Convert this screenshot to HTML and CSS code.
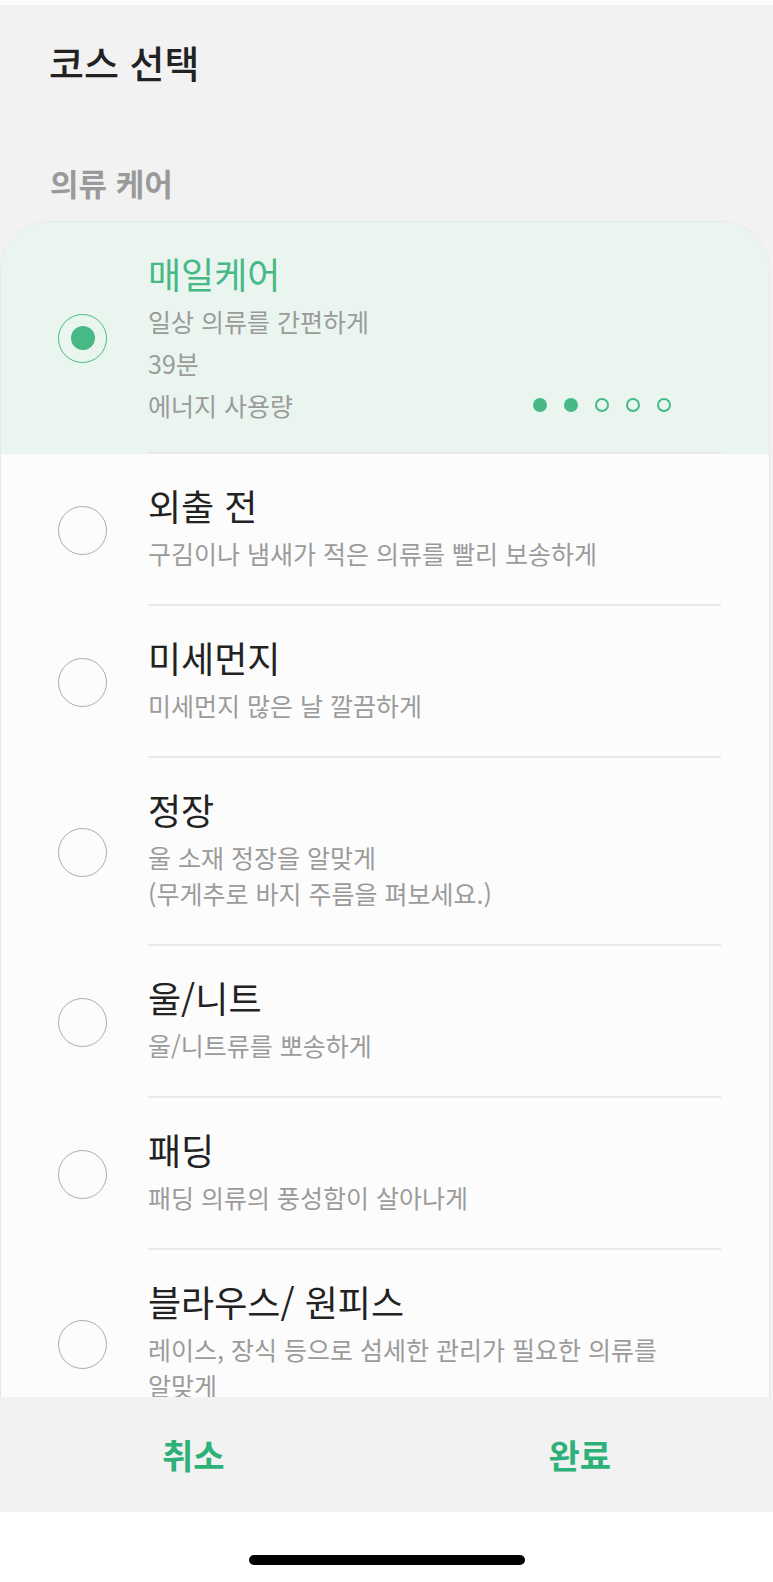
FILE: index.html
```html
<!DOCTYPE html>
<html lang="ko">
<head>
    <meta charset="UTF-8">
    <title>코스 선택</title>
    <link rel="stylesheet" href="styles.css">
</head>
<body>
    <div class="status"></div>
    <div class="content">
        <h1 class="page-title">코스 선택</h1>
        <div class="section-label">의류 케어</div>

        <div class="course-list">
            <div class="course selected">
                <span class="radio"></span>
                <div class="info">
                    <div class="name">매일케어</div>
                    <div class="desc">일상 의류를 간편하게</div>
                    <div class="desc">39분</div>
                    <div class="desc energy">
                        <span>에너지 사용량</span>
                        <span class="dots">
                            <i class="on"></i><i class="on"></i><i></i><i></i><i></i>
                        </span>
                    </div>
                </div>
            </div>

            <div class="course">
                <span class="radio"></span>
                <div class="info">
                    <div class="name">외출 전</div>
                    <div class="desc">구김이나 냄새가 적은 의류를 빨리 보송하게</div>
                </div>
            </div>

            <div class="course">
                <span class="radio"></span>
                <div class="info">
                    <div class="name">미세먼지</div>
                    <div class="desc">미세먼지 많은 날 깔끔하게</div>
                </div>
            </div>

            <div class="course">
                <span class="radio"></span>
                <div class="info">
                    <div class="name">정장</div>
                    <div class="desc">울 소재 정장을 알맞게<br>(무게추로 바지 주름을 펴보세요.)</div>
                </div>
            </div>

            <div class="course">
                <span class="radio"></span>
                <div class="info">
                    <div class="name">울/니트</div>
                    <div class="desc">울/니트류를 뽀송하게</div>
                </div>
            </div>

            <div class="course">
                <span class="radio"></span>
                <div class="info">
                    <div class="name">패딩</div>
                    <div class="desc">패딩 의류의 풍성함이 살아나게</div>
                </div>
            </div>

            <div class="course">
                <span class="radio"></span>
                <div class="info">
                    <div class="name">블라우스/ 원피스</div>
                    <div class="desc">레이스, 장식 등으로 섬세한 관리가 필요한 의류를<br>알맞게</div>
                </div>
            </div>
        </div>
    </div>

    <div class="actions">
        <button>취소</button>
        <button>완료</button>
    </div>

    <div class="home-area">
        <div class="home-bar"></div>
    </div>
</body>
</html>
```

FILE: styles.css
```css
body {
    font-family: 'Noto Sans CJK KR', 'Noto Sans', sans-serif;
    margin: 0;
    padding: 0;
    width: 773px;
    height: 1582px;
    overflow: hidden;
    background-color: #f2f2f2;
    display: flex;
    flex-direction: column;
}
.status {
    height: 5px;
    background-color: #fbfbfb;
}
.content {
    flex: 1;
    overflow: hidden;
}
.page-title {
    margin: 0;
    padding: 35px 49px 0;
    font-size: 38px;
    line-height: 44px;
    font-weight: 500;
    color: #222;
}
.section-label {
    padding: 79px 50px 0;
    font-size: 31px;
    line-height: 40px;
    font-weight: 700;
    color: #9a9a9a;
}
.course-list {
    margin: 18px 3px 0 0;
    background-color: #fcfcfc;
    border: 1px solid #e6e9e8;
    border-bottom: none;
    border-radius: 50px 50px 0 0;
    overflow: hidden;
}
.course {
    display: flex;
    align-items: center;
    gap: 41px;
    padding-left: 57px;
}
.course.selected {
    background-color: #eaf5f0;
}
.radio {
    flex: none;
    width: 47px;
    height: 47px;
    border: 1.5px solid #ababab;
    border-radius: 50%;
    position: relative;
}
.selected .radio {
    border-color: #46b986;
}
.selected .radio::after {
    content: '';
    position: absolute;
    left: 50%;
    top: 50%;
    width: 24px;
    height: 24px;
    margin: -12px 0 0 -12px;
    border-radius: 50%;
    background-color: #46b986;
}
.info {
    flex: 1;
    margin-right: 48px;
    padding: 31px 0 33px;
    border-bottom: 2px solid #e9e9e9;
}
.selected .info {
    padding-bottom: 29px;
}
.name {
    font-size: 36px;
    line-height: 40px;
    font-weight: 400;
    color: #222;
}
.selected .name {
    color: #46b986;
}
.desc {
    margin-top: 10px;
    font-size: 25px;
    line-height: 36px;
    color: #9b9b9b;
}
.selected .desc + .desc {
    margin-top: 6px;
}
.energy {
    display: flex;
    align-items: center;
}
.dots {
    display: flex;
    gap: 17px;
    margin-left: auto;
    margin-right: 50px;
}
.dots i {
    width: 10px;
    height: 10px;
    border: 2.5px solid #46b986;
    border-radius: 50%;
}
.dots i.on {
    background-color: #46b986;
}
.actions {
    display: flex;
    height: 115px;
    background-color: #f2f2f2;
}
.actions button {
    flex: 1;
    border: none;
    background: none;
    font-family: inherit;
    font-size: 34px;
    font-weight: 700;
    color: #2eb179;
    padding: 0;
}
.home-area {
    height: 70px;
    background-color: #fff;
    display: flex;
    justify-content: center;
    padding-top: 43px;
    box-sizing: border-box;
}
.home-bar {
    width: 276px;
    height: 10px;
    border-radius: 5px;
    background-color: #000;
}
```
